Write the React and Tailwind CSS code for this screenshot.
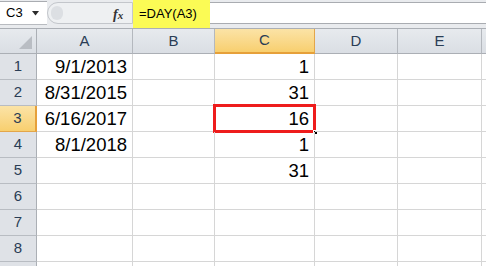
import React from "react";

const cols = [
  { key: "A", w: 96 },
  { key: "B", w: 82 },
  { key: "C", w: 100 },
  { key: "D", w: 83 },
  { key: "E", w: 84 },
];

const data = {
  1: { A: "9/1/2013", C: "1" },
  2: { A: "8/31/2015", C: "31" },
  3: { A: "6/16/2017", C: "16" },
  4: { A: "8/1/2018", C: "1" },
  5: { C: "31" },
};

const font = { fontFamily: '"Liberation Sans", Arial, sans-serif' };

function ColHeader({ c }) {
  const sel = c.key === "C";
  return (
    <div
      className={
        "h-full shrink-0 flex items-center justify-center text-[15px] text-[#2a3d55] border-r " +
        (sel
          ? "bg-gradient-to-b from-[#fbe3a6] to-[#f8cf6e] border-r-[#e3a64a] border-b-2 border-b-[#e6a03a]"
          : "bg-gradient-to-b from-[#e7eaee] to-[#dadee4] border-r-[#b4b8be] border-b border-b-[#abafb5]")
      }
      style={{ width: c.w }}
    >
      {c.key}
    </div>
  );
}

export default function App() {
  const rows = [1, 2, 3, 4, 5, 6, 7, 8, 9];
  return (
    <div className="w-[486px] h-[266px] overflow-hidden bg-white relative" style={font}>
      {/* formula bar */}
      <div className="h-[28px] flex bg-[#e9ebee]">
        <div className="w-[47px] h-[24px] mt-[1px] bg-white border-t border-t-[#a9acb1] border-b border-b-[#b8bbc0] flex items-center pl-[6px] text-[13px] text-black relative">
          <span>C3</span>
          <svg className="absolute left-[32px] top-[9px]" width="8" height="5" viewBox="0 0 8 5">
            <path d="M0 0 H7 L3.5 4.5 Z" fill="#2b2b2b" />
          </svg>
        </div>
        <div className="w-[86px] h-[22px] mt-[2px] relative">
          <div className="absolute left-[0px] top-[0px] w-[86px] h-[22px] rounded-l-full bg-[#eef0f2] border border-[#c3c6cb]" />
          <div className="absolute left-[4px] top-[4px] w-[12px] h-[14px] rounded-full bg-[#dcdfe3]" />
          <span
            className="absolute left-[66px] top-[2px] text-[14px] italic text-[#333]"
            style={{ fontFamily: '"Liberation Serif", serif', fontWeight: 700 }}
          >
            f<span className="text-[11px]">x</span>
          </span>
        </div>
        <div className="w-[77px] h-[28px] bg-[#fbfb55] flex items-center pl-[6px] text-[13px] text-black">
          =DAY(A3)
        </div>
        <div className="flex-1 h-[22px] mt-[2px] bg-white border-t border-t-[#a9acb1] border-b border-b-[#a9acb1]" />
      </div>

      {/* header row */}
      <div className="h-[26px] flex border-t border-t-[#abafb5]">
        <div className="w-[37px] h-full shrink-0 bg-gradient-to-b from-[#e7eaee] to-[#dadee4] border-r border-r-[#abafb5] border-b border-b-[#abafb5] relative">
          <svg className="absolute right-[4px] bottom-[4px]" width="13" height="13" viewBox="0 0 13 13">
            <path d="M13 0 V13 H0 Z" fill="#b9bdc3" />
          </svg>
        </div>
        {cols.map((c) => (
          <ColHeader key={c.key} c={c} />
        ))}
        <div className="flex-1 h-full bg-gradient-to-b from-[#e7eaee] to-[#dadee4] border-b border-b-[#abafb5]" />
      </div>

      {/* rows */}
      {rows.map((r) => {
        const sel = r === 3;
        return (
          <div key={r} className="h-[26px] flex">
            <div
              className={
                "w-[37px] h-full shrink-0 flex items-center justify-center text-[15px] text-[#2a3d55] border-b " +
                (sel
                  ? "bg-gradient-to-b from-[#fbe3a6] to-[#f8cf6e] border-r-2 border-r-[#e6a03a] border-b-[#e3a64a]"
                  : "bg-[#dfe2e7] border-r border-r-[#abafb5] border-b-[#b8bcc2]")
              }
            >
              {r < 9 ? r : ""}
            </div>
            {cols.map((c) => {
              const v = data[r] && data[r][c.key];
              const active = sel && c.key === "C";
              return (
                <div
                  key={c.key}
                  className="h-full shrink-0 border-r border-b border-[#d6d6d6] flex items-center justify-end pr-[5px] text-[18.5px] text-black relative"
                  style={{ width: c.w }}
                >
                  {v}
                  {active && (
                    <>
                      <div className="absolute left-[-2px] top-[-2px] right-[-2px] bottom-[-2px] border-[3px] border-[#ee1c1c]" />
                      <div className="absolute right-[-4px] bottom-[-4px] w-[5px] h-[5px] bg-black border border-white" />
                    </>
                  )}
                </div>
              );
            })}
            <div className="flex-1 h-full border-b border-[#d6d6d6]" />
          </div>
        );
      })}
    </div>
  );
}
